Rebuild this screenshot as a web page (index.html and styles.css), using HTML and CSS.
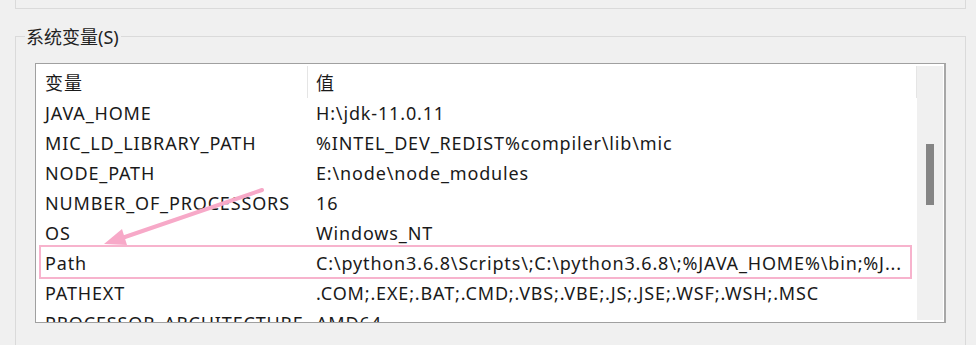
FILE: index.html
```html
<!DOCTYPE html>
<html lang="zh-CN">
<head>
<meta charset="utf-8">
<title>系统变量</title>
<link rel="stylesheet" href="styles.css">
</head>
<body>
<div class="top-group"></div>
<div class="group">
  <span class="legend">系统变量(S)</span>
  <div class="list">
    <div class="list-body">
      <div class="row head">
        <div class="cell name">变量</div>
        <div class="cell value">值</div>
      </div>
      <div class="row"><div class="cell name">JAVA_HOME</div><div class="cell value">H:\jdk-11.0.11</div></div>
      <div class="row"><div class="cell name">MIC_LD_LIBRARY_PATH</div><div class="cell value">%INTEL_DEV_REDIST%compiler\lib\mic</div></div>
      <div class="row"><div class="cell name">NODE_PATH</div><div class="cell value">E:\node\node_modules</div></div>
      <div class="row"><div class="cell name">NUMBER_OF_PROCESSORS</div><div class="cell value">16</div></div>
      <div class="row"><div class="cell name">OS</div><div class="cell value">Windows_NT</div></div>
      <div class="row marked"><div class="cell name">Path</div><div class="cell value">C:\python3.6.8\Scripts\;C:\python3.6.8\;%JAVA_HOME%\bin;%J...</div></div>
      <div class="row"><div class="cell name">PATHEXT</div><div class="cell value">.COM;.EXE;.BAT;.CMD;.VBS;.VBE;.JS;.JSE;.WSF;.WSH;.MSC</div></div>
      <div class="row"><div class="cell name">PROCESSOR_ARCHITECTURE</div><div class="cell value">AMD64</div></div>
    </div>
    <div class="scrollbar"><div class="thumb"></div></div>
  </div>
</div>
<svg class="arrow" width="976" height="345" viewBox="0 0 976 345" aria-hidden="true">
  <line x1="262" y1="190" x2="122" y2="238" stroke="#f7a9c8" stroke-width="4" stroke-linecap="round"/>
  <polygon points="104,244 122,229 127,245" fill="#f7a9c8"/>
</svg>
</body>
</html>
```
FILE: styles.css
```css
html, body {
  margin: 0;
  padding: 0;
  background: #f0f0f0;
  height: 345px;
  overflow: hidden;
}
body {
  font-family: "Noto Sans", "Noto Sans CJK SC", sans-serif;
  color: #1a1a1a;
  position: relative;
}
.top-group {
  margin: 0 10px 0 15px;
  height: 8px;
  border: 1px solid #dadada;
  border-top: none;
}
.group {
  position: relative;
  margin: 27px 10px 0 15px;
  border: 1px solid #dadada;
  border-bottom: none;
  height: 320px;
  padding: 26px 19px 0 19px;
  box-sizing: border-box;
}
.legend {
  position: absolute;
  top: -11px;
  left: 9px;
  padding: 0 2px 0 1px;
  background: #f0f0f0;
  font-size: 18px;
  line-height: 22px;
  color: #222;
}
.list {
  height: 260px;
  box-sizing: border-box;
  border: 1px solid #a0a0a0;
  border-right: 2px solid #a7a7a7;
  background: #fff;
  display: flex;
  overflow: hidden;
}
.list-body {
  width: 881px;
  overflow: hidden;
}
.row {
  display: grid;
  grid-template-columns: 271px 1fr;
  height: 30px;
  align-items: center;
  font-size: 18px;
  letter-spacing: 0.85px;
  white-space: nowrap;
}
.row.head {
  height: 34px;
  align-items: stretch;
  letter-spacing: 1px;
}
.row.head .cell {
  display: flex;
  align-items: center;
  margin-top: 2px;
}
.row.head .value {
  border-left: 1px solid #e5e5e5;
  border-right: 1px solid #e5e5e5;
}
.cell {
  overflow: hidden;
}
.cell.name {
  padding-left: 9px;
}
.cell.value {
  padding-left: 9px;
}
.row.head .cell.value {
  padding-left: 8px;
}
.row.marked {
  position: relative;
}
.row.marked::after {
  content: "";
  position: absolute;
  left: 3px;
  right: 5px;
  top: -3px;
  bottom: -1px;
  border: 2px solid #f7b3cd;
}
.scrollbar {
  flex: 1;
  margin: 2px 1px 2px 0;
  background: #f0f0f0;
  position: relative;
}
.thumb {
  position: absolute;
  left: 9px;
  top: 78px;
  width: 8px;
  height: 61px;
  background: #858585;
}
.arrow {
  position: absolute;
  left: 0;
  top: 0;
  pointer-events: none;
}
```
